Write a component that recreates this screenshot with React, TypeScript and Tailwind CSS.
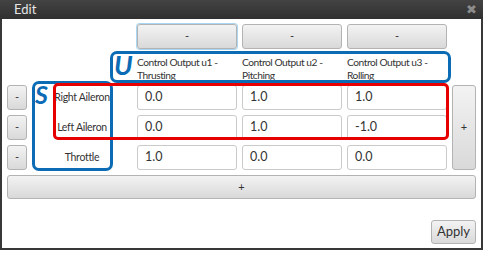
const font = { fontFamily: 'Lato, "Open Sans", sans-serif' }

function Btn({ label, className = "" }: { label: string; className?: string }) {
  return (
    <div
      className={`flex items-center justify-center rounded-[3px] border border-[#b3b3b3] bg-gradient-to-b from-[#f3f3f3] to-[#d9d9d9] text-[11px] text-[#333] ${className}`}
    >
      {label}
    </div>
  )
}

function Cell({ value }: { value: string }) {
  return (
    <div className="flex items-center rounded-[3px] border border-[#cacaca] bg-white pl-[7px] text-[12.5px] text-[#333]">
      {value}
    </div>
  )
}

const rows = [
  { name: "Right Aileron", values: ["0.0", "1.0", "1.0"] },
  { name: "Left Aileron", values: ["0.0", "1.0", "-1.0"] },
  { name: "Throttle", values: ["1.0", "0.0", "0.0"] },
]

const outputs = [
  ["Control Output u1 -", "Thrusting"],
  ["Control Output u2 -", "Pitching"],
  ["Control Output u3 -", "Rolling"],
]

export default function App() {
  return (
    <div className="h-[257px] w-[491px] bg-white" style={font}>
      <div className="flex h-[250px] w-[483px] flex-col">
        <div className="flex h-[19px] items-center justify-between bg-gradient-to-b from-[#434343] to-[#303030] pl-[14px] pr-[6px]">
          <span className="text-[13px] leading-none text-[#e6e6e6]">Edit</span>
          <span className="text-[13px] leading-none text-[#8c8c8c]">✖</span>
        </div>

        <div className="relative flex flex-1 flex-col border-x-2 border-b-2 border-[#383838] px-[5px] pb-[4px] pt-[5px]">
          <div className="grid grid-cols-[20px_100px_100px_100px_100px_24px] grid-rows-[25px_26px_25px_25px_25px] gap-[5px]">
            <div />
            <div />
            <Btn label="-" className="border-[#5fb0e0] ring-1 ring-[#a9d6f2]" />
            <Btn label="-" />
            <Btn label="-" />
            <div />

            <div />
            <div />
            {outputs.map(([a, b]) => (
              <div key={a} className="pt-[2px] text-[10.2px] leading-[12.5px] tracking-[-0.45px] text-[#333]">
                <div>{a}</div>
                <div>{b}</div>
              </div>
            ))}
            <div />

            {rows.map((r, i) => (
              <>
                <Btn key={r.name + "b"} label="-" />
                <div key={r.name} className="flex items-center justify-center text-[10.5px] tracking-[-0.3px] text-[#333]">
                  {r.name}
                </div>
                {r.values.map((v, j) => (
                  <Cell key={r.name + j} value={v} />
                ))}
                {i === 0 && <Btn label="+" className="row-span-3" />}
              </>
            ))}
          </div>

          <Btn label="+" className="mt-[5px] h-[24px]" />
          <div className="flex-1" />
          <Btn label="Apply" className="h-[24px] w-[45px] self-end text-[13px]" />

          {/* annotations */}
          <div className="absolute left-[108px] top-[32px] h-[32px] w-[341px] rounded-[7px] border-[3px] border-[#0b6cb5]" />
          <div className="absolute left-[30px] top-[62px] h-[90px] w-[81px] rounded-[7px] border-[3px] border-[#0b6cb5]" />
          <div className="absolute left-[51px] top-[64px] h-[57px] w-[396px] rounded-[5px] border-[3px] border-[#e60000]" />
          <span className="absolute left-[112px] top-[30px] text-[27px] font-bold italic leading-[32px] text-[#0b6cb5]">U</span>
          <span className="absolute left-[33px] top-[61px] text-[25px] font-bold italic leading-[28px] text-[#0b6cb5]">S</span>
        </div>
      </div>
    </div>
  )
}
